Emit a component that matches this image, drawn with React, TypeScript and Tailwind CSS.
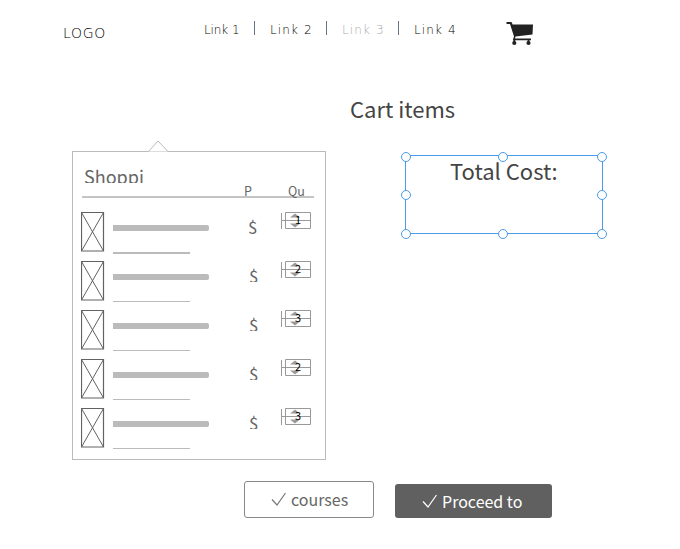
import React from 'react';

const sans = "font-['Noto_Sans_CJK_SC','Noto_Sans',sans-serif]";
const hand = "font-['DejaVu_Sans_Light','DejaVu_Sans',sans-serif]";

function Divider() {
  return <span className="mt-px h-[14px] w-px shrink-0 bg-[#64748b]" />;
}

function CartIcon() {
  return (
    <svg className="mt-[21px] ml-[49px] block h-[25px] w-[28px]" viewBox="0 0 28 25" fill="#222">
      <path d="M0.500 1h4.400c.6 0 .9.3 1.100.8L6.500 3.500H27l-.5 10L9.500 15.500l-.5 2H25v1.800H6.800L8 15.500 4 3H.5z" />
      <circle cx="8.300" cy="22" r="2.100" />
      <circle cx="22.500" cy="22" r="2.100" />
      <path d="M7.400 18h1.800v4H7.400zM21.600 18h1.800v4h-1.800z" />
    </svg>
  );
}

function Header() {
  return (
    <header className={`flex h-[60px] items-start whitespace-nowrap text-black ${hand}`}>
      <div className="mt-[23px] ml-[63px] w-[141px] text-[14px] leading-[21px] font-extralight tracking-[0.700px]">LOGO</div>
      <nav className="mt-[20px] flex h-[18px] w-[253px] items-start text-[12px] leading-[20px] font-extralight tracking-[1.100px]">
        <a className="w-[50px] tracking-[-0.100px]">Link 1</a>
        <Divider />
        <a className="ml-[15px] w-[56px]">Link 2</a>
        <Divider />
        <a className="ml-[15px] w-[56px] text-[#aaa]">Link 3</a>
        <Divider />
        <a className="ml-[15px]">Link 4</a>
      </nav>
      <CartIcon />
    </header>
  );
}

function ImagePlaceholder() {
  return (
    <svg className="block h-[40px] w-[24px] shrink-0" viewBox="0 0 24 40" fill="none" stroke="#626262">
      <path d="M.5 .5h22v38.500h-22z" strokeWidth="1.200" />
      <path d="M.5 .5l22 38.500M22.500 .5L.5 39" strokeWidth="1" />
    </svg>
  );
}

function Stepper({ value }: { value: string }) {
  return (
    <div className="relative h-[18px] w-[30px] shrink-0">
      <svg className="block h-[18px] w-[30px]" viewBox="0 0 30 18" fill="none" stroke="#999">
        <path d="M.5 1v16M4.500 .5h25v16h-25zM.5 8.500h29" />
        <path d="M9 5.500l5-4 5 4zM9 11.500l5 4 5-4z" fill="#999" stroke="none" />
      </svg>
      <span className="absolute top-0 left-[14px] text-[11px] leading-[15px] text-black">{value}</span>
    </div>
  );
}

function CartRow({ value, first }: { value: string; first: boolean }) {
  return (
    <div className="flex h-[48.900px] items-start">
      <ImagePlaceholder />
      <div className="ml-[8px] w-[97px] pt-[13px]">
        <div className="h-[6px] w-[96px] rounded-r-[2px] bg-[#bbb]" />
        <div className="mt-[21px] h-[1.500px] w-[77px] bg-[#bbb]" />
      </div>
      <div className={`mt-[6px] overflow-hidden text-[17px] leading-[17px] text-[#666] ${first ? 'ml-[38px] mr-[23px] h-[16px] w-[10px]' : 'ml-[39px] mr-[22px] h-[15px] w-[10px]'}`}>
        $
      </div>
      <Stepper value={value} />
    </div>
  );
}

function CartPanel() {
  return (
    <section className="ml-[72px] w-[254px]">
      <svg className="relative z-10 -mb-px ml-[76px] block h-[12px] w-[21px]" viewBox="0 0 21 12">
        <path d="M.5 11.500L10 1l10 10.500" fill="#fff" stroke="#bbb" />
      </svg>
      <div className="h-[309px] border border-[#bbb] pl-[8px]">
        <div className="ml-[3px] h-[31px] overflow-hidden pt-[12px] text-[18px] leading-[25px] text-[#666]">Shoppi</div>
        <div className="mt-[2px] ml-[1px] flex h-[13px] w-[232px] border-b-2 border-[#c4c4c4] text-[12.500px] leading-[12px] text-[#666]">
          <span className="ml-[162px] w-[44px]">P</span>
          <span>Qu</span>
        </div>
        <div className="pt-[14px]">
          {['1', '2', '3', '2', '3'].map((value, i) => (
            <CartRow key={i} value={value} first={i === 0} />
          ))}
        </div>
      </div>
    </section>
  );
}

const handles = [
  'left-[0px] top-[2px]',
  'left-[97px] top-[2px]',
  'left-[196px] top-[2px]',
  'left-[0px] top-[40px]',
  'left-[196px] top-[40px]',
  'left-[0px] top-[79px]',
  'left-[97px] top-[79px]',
  'left-[196px] top-[79px]',
];

function TotalCost() {
  return (
    <section className="relative mt-[10px] ml-[75px] h-[90px] w-[208px] pt-[5px] pl-[4px]">
      <div className="h-[79px] w-[198px] border border-[#4a9be8] pl-[44px] text-[22px] leading-[29px] whitespace-nowrap text-[#444]">
        Total Cost:
      </div>
      {handles.map((position) => (
        <i key={position} className={`absolute size-[10px] rounded-full border border-[#4a9be8] bg-white ${position}`} />
      ))}
    </section>
  );
}

function Check({ color }: { color: string }) {
  return (
    <svg className="block h-[16px] w-[16px] shrink-0" viewBox="0 0 16 16" fill="none" stroke={color} strokeWidth="1.200">
      <path d="M1 8.500L6 14 14.500 2" />
    </svg>
  );
}

export default function App() {
  return (
    <main className={`h-[549px] w-[680px] overflow-hidden bg-white ${sans}`}>
      <Header />
      <h1 className="mt-[32px] ml-[350px] h-[48px] text-[22px] leading-[32px] whitespace-nowrap text-[#444]">Cart items</h1>
      <div className="flex h-[341px] items-start">
        <CartPanel />
        <TotalCost />
      </div>
      <div className="ml-[244px] flex items-start text-[16px]">
        <button className="flex h-[37px] w-[130px] items-center gap-[4px] rounded-[3px] border border-[#888] pb-[2px] pl-[26px] text-[#666]">
          <Check color="#777" />
          courses
        </button>
        <button className="mt-[3px] ml-[21px] flex h-[34px] w-[157px] items-center gap-[4px] rounded-[3px] bg-[#606060] pl-[27px] text-white">
          <Check color="#fff" />
          <span className="whitespace-nowrap">Proceed to</span>
        </button>
      </div>
    </main>
  );
}
